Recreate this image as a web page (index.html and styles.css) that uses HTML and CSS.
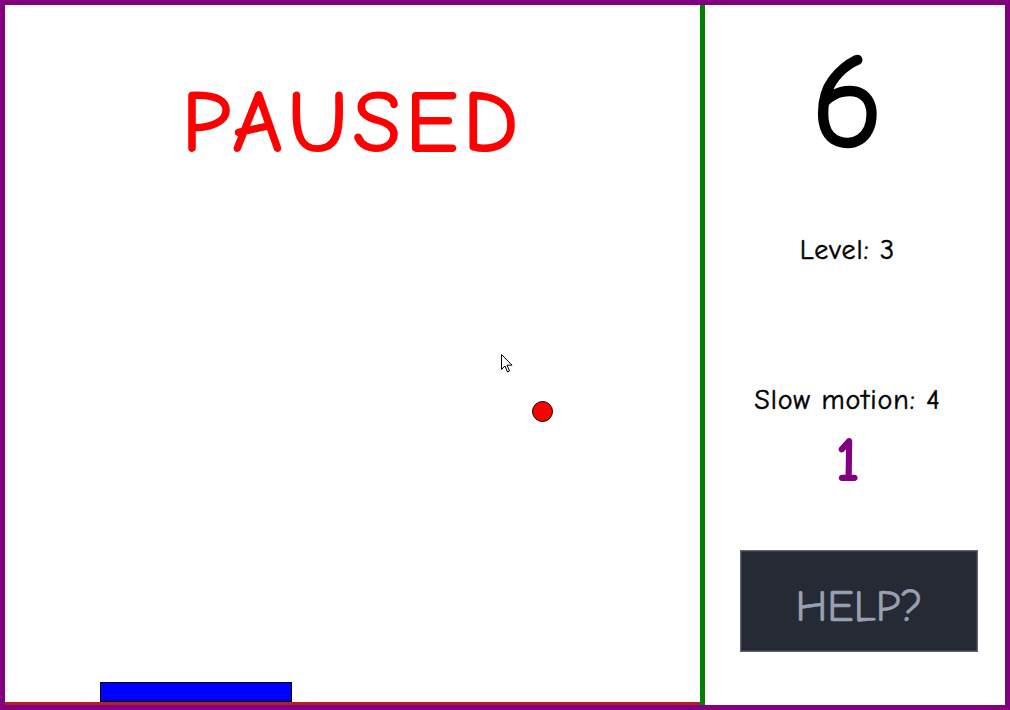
FILE: index.html
```html
<!DOCTYPE html>
<html lang="en">
<head>
<meta charset="utf-8">
<title>Paused</title>
<link rel="stylesheet" href="styles.css">
</head>
<body>
<div class="frame">
  <main class="game">
    <h1 class="paused">PAUSED</h1>
    <div class="ball"></div>
    <div class="paddle"></div>
    <svg class="cursor" width="12" height="20" viewBox="0 0 12 20">
      <path d="M0.5 0.5 L0.5 15.5 L4 12 L6.5 18 L8.5 17 L6 11.2 L11 11.2 Z" fill="#fff" stroke="#000" stroke-width="1" stroke-linejoin="miter"/>
    </svg>
  </main>
  <aside class="side">
    <div class="score">6</div>
    <div class="stat level">Level: 3</div>
    <div class="stat slow">Slow motion: 4</div>
    <div class="slow-count">1</div>
    <button class="help">HELP?</button>
  </aside>
</div>
</body>
</html>
```
FILE: styles.css
```css
html, body {
  margin: 0;
  padding: 0;
  background: #fff;
}
body {
  font-family: "Comic Sans MS", "Comic Neue", "DejaVu Sans", sans-serif;
}
.frame {
  width: 1010px;
  height: 710px;
  box-sizing: border-box;
  border: 5px solid #800080;
  display: flex;
  background: #fff;
}
.game {
  position: relative;
  width: 695px;
  height: 700px;
  box-sizing: border-box;
  border-bottom: 3px solid #b22222;
  display: flex;
  flex-direction: column;
  align-items: center;
}
.paused {
  margin: 75px 0 0 0;
  font-size: 87px;
  line-height: 1;
  font-weight: normal;
  color: #ff0000;
  -webkit-text-stroke: 2px #ff0000;
  letter-spacing: 5px;
}
.ball {
  position: absolute;
  left: 527px;
  top: 396px;
  width: 21px;
  height: 21px;
  box-sizing: border-box;
  border-radius: 50%;
  background: #ff0000;
  border: 1px solid #000;
}
.paddle {
  position: absolute;
  left: 95px;
  bottom: 0;
  width: 192px;
  height: 20px;
  box-sizing: border-box;
  background: #0000ff;
  border: 1px solid #000;
}
.cursor {
  position: absolute;
  left: 496px;
  top: 349px;
}
.side {
  width: 300px;
  height: 700px;
  box-sizing: border-box;
  border-left: 5px solid #008000;
  padding: 31px 10px 0 0;
  display: flex;
  flex-direction: column;
  align-items: center;
}
.score {
  font-size: 134px;
  line-height: 1;
  height: 132px;
  font-weight: normal;
  color: #000;
  -webkit-text-stroke: 2.5px #000;
}
.stat {
  font-size: 28px;
  line-height: 1;
  color: #000;
  letter-spacing: 1px;
  -webkit-text-stroke: 0.5px #000;
}
.level {
  margin-top: 68px;
}
.slow {
  margin-top: 122px;
}
.slow-count {
  margin-top: 14px;
  font-size: 64px;
  line-height: 1;
  font-weight: bold;
  color: #800080;
}
.help {
  align-self: flex-start;
  margin: 58px 0 0 35px;
  width: 238px;
  height: 102px;
  box-sizing: border-box;
  background: #262a35;
  border: 1px solid #5f6574;
  box-shadow: inset 0 0 0 1px #393e4b;
  color: #9aa0b4;
  font-family: inherit;
  font-size: 44px;
  -webkit-text-stroke: 0.6px #9aa0b4;
  padding: 10px 0 0 0;
}
```
